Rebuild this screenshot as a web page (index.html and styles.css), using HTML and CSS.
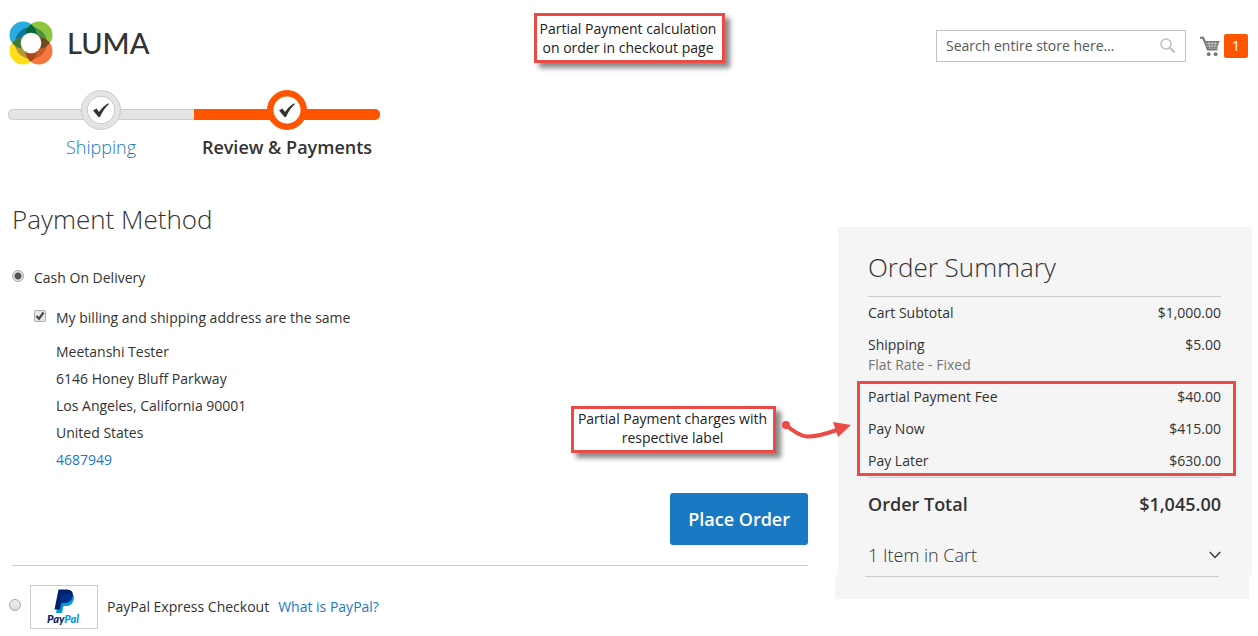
FILE: index.html
```html
<!DOCTYPE html>
<html lang="en">
<head>
<meta charset="utf-8">
<meta name="viewport" content="width=device-width, initial-scale=1">
<title>Checkout</title>
<link rel="stylesheet" href="styles.css">
</head>
<body>
<div class="page">
  <header class="header">
    <a class="logo" href="#">
      <svg class="logo-mark" viewBox="0 0 44 44" width="44" height="44" aria-hidden="true">
        <defs>
          <clipPath id="clip-blue"><circle cx="14" cy="14" r="13.5"/></clipPath>
          <clipPath id="clip-green"><circle cx="30" cy="14" r="13.5"/></clipPath>
          <clipPath id="clip-yellow"><circle cx="14" cy="30" r="13.5"/></clipPath>
          <clipPath id="clip-orange"><circle cx="30" cy="30" r="13.5"/></clipPath>
        </defs>
        <circle cx="14" cy="14" r="13.5" fill="#29abe2"/>
        <circle cx="30" cy="14" r="13.5" fill="#8cc63f"/>
        <circle cx="14" cy="30" r="13.5" fill="#ffde17"/>
        <circle cx="30" cy="30" r="13.5" fill="#f7783c"/>
        <g clip-path="url(#clip-blue)"><circle cx="22" cy="22" r="16" fill="#12759f"/></g>
        <g clip-path="url(#clip-green)"><circle cx="22" cy="22" r="16" fill="#4d9140"/></g>
        <g clip-path="url(#clip-yellow)"><circle cx="22" cy="22" r="16" fill="#b39a33"/></g>
        <g clip-path="url(#clip-orange)"><circle cx="22" cy="22" r="16" fill="#c45a2c"/></g>
        <g clip-path="url(#clip-blue)"><circle cx="30" cy="14" r="13.5" fill="#00693c"/><circle cx="14" cy="30" r="13.5" fill="#3f7a35"/></g>
        <g clip-path="url(#clip-orange)"><circle cx="30" cy="14" r="13.5" fill="#6b4a1f"/><circle cx="14" cy="30" r="13.5" fill="#a8481f"/></g>
        <circle cx="22" cy="22" r="10.300" fill="#fff"/>
      </svg>
      <span class="logo-text">LUMA</span>
    </a>
    <div class="tools">
      <form class="search" role="search">
        <input class="search-input" type="text" aria-label="Search" placeholder="Search entire store here...">
        <button class="search-button" type="button" aria-label="Search">
          <svg viewBox="0 0 16 16" width="16" height="16" aria-hidden="true"><circle cx="6" cy="6" r="5" fill="none" stroke="#c2c2c2" stroke-width="1.6"/><path d="M9.8 9.8 14.6 14.4" stroke="#c2c2c2" stroke-width="2.2"/></svg>
        </button>
      </form>
      <a class="cart" href="#" aria-label="Cart, 1 item">
        <svg viewBox="0 0 20 21" width="20" height="21" aria-hidden="true">
          <path d="M0 1.8h3.2l4.6 11.7h9.7" fill="none" stroke="#757575" stroke-width="2"/>
          <path d="M4 5h15.6l-2.4 7.5H7z" fill="#757575"/>
          <path d="M5.5 7.3h13M6.3 10h11.8M8.8 5.8l1 6M12 5.8v6M15.5 5.8l-.8 6" stroke="#fff" stroke-width=".5"/>
          <circle cx="8.7" cy="18.2" r="1.9" fill="#757575"/><circle cx="15.6" cy="18.2" r="1.9" fill="#757575"/>
        </svg>
        <span class="cart-count">1</span>
      </a>
    </div>
  </header>

  <ol class="progress">
    <li class="step">
      <span class="step-marker"><svg viewBox="0 0 18 16" width="18" height="16" aria-hidden="true"><path d="M1 8.5 4.5 6.5 7 10Q11 4 16.5 1.2L17 2Q11.5 7 8 15H6.5Z" fill="#333"/></svg></span>
      <a class="step-label" href="#">Shipping</a>
    </li>
    <li class="step step-active">
      <span class="step-marker"><svg viewBox="0 0 18 16" width="18" height="16" aria-hidden="true"><path d="M1 8.5 4.5 6.5 7 10Q11 4 16.5 1.2L17 2Q11.5 7 8 15H6.5Z" fill="#333"/></svg></span>
      <span class="step-label">Review &amp; Payments</span>
    </li>
  </ol>

  <div class="columns">
    <main class="payment">
      <h1 class="title">Payment Method</h1>
      <div class="choice">
        <input class="radio" type="radio" name="method" id="cod" checked>
        <label for="cod">Cash On Delivery</label>
      </div>
      <div class="billing">
        <div class="choice">
          <input class="checkbox" type="checkbox" id="same" checked>
          <label for="same">My billing and shipping address are the same</label>
        </div>
        <address class="address">
          Meetanshi Tester<br>
          6146 Honey Bluff Parkway<br>
          Los Angeles, California 90001<br>
          United States<br>
          <a href="#">4687949</a>
        </address>
      </div>
      <div class="actions"><button class="place-order" type="button">Place Order</button></div>
      <div class="paypal">
        <input class="radio" type="radio" name="method" id="paypal">
        <label class="paypal-label" for="paypal">
          <span class="paypal-logo">
            <svg viewBox="0 0 66 42" width="66" height="42" role="img" aria-label="PayPal">
              <path d="M29 7h11Q44 9 42.5 14 41 20 35 20h-2.5L31 27h-6Z" fill="#009cde"/>
              <path d="M27.5 3.5h9Q43 4 41.5 10.5 40 17 33.5 17H30.5L29 23.5h-5.5Z" fill="#012169"/>
              <path d="M30 8h8Q41.8 8 41.5 10.5 40 17 33.5 17h-5Z" fill="#002f86"/>
              <text class="paypal-word" x="32" y="37" text-anchor="middle"><tspan fill="#012169">Pay</tspan><tspan fill="#009cde">Pal</tspan></text>
            </svg>
          </span>
          PayPal Express Checkout
        </label>
        <a class="paypal-help" href="#">What is PayPal?</a>
      </div>
    </main>

    <aside class="sidebar">
      <div class="summary">
        <h2 class="title">Order Summary</h2>
        <table class="totals">
          <tbody>
            <tr><th scope="row">Cart Subtotal</th><td>$1,000.00</td></tr>
            <tr><th scope="row">Shipping<span class="method">Flat Rate - Fixed</span></th><td>$5.00</td></tr>
          </tbody>
          <tbody>
            <tr><th scope="row">Partial Payment Fee</th><td>$40.00</td></tr>
            <tr><th scope="row">Pay Now</th><td>$415.00</td></tr>
            <tr><th scope="row">Pay Later</th><td>$630.00</td></tr>
          </tbody>
          <tfoot>
            <tr><th scope="row">Order Total</th><td>$1,045.00</td></tr>
          </tfoot>
        </table>
        <button class="items" type="button" aria-expanded="false">
          <span>1 Item in Cart</span>
          <svg viewBox="0 0 12 8" width="12" height="8" aria-hidden="true"><path d="M.8 1 6 6.5 11.2 1" fill="none" stroke="#333" stroke-width="1.3"/></svg>
        </button>
      </div>
      <div class="summary-end"></div>
      <div class="highlight"></div>
      <div class="note-charges">
        <p class="note">Partial Payment charges with respective label</p>
        <svg class="arrow" viewBox="0 0 72 26" width="72" height="26" aria-hidden="true">
          <circle cx="6" cy="8" r="4" fill="#eb4b46"/>
          <path d="M6 8C22 22 28 23 57 13" fill="none" stroke="#eb4b46" stroke-width="4"/>
          <path d="M53 5 71 8 58 20Z" fill="#eb4b46"/>
        </svg>
      </div>
    </aside>
  </div>
  <p class="note note-top">Partial Payment calculation on order in checkout page</p>
</div>
</body>
</html>
```
FILE: styles.css
```css
* {
  box-sizing: border-box;
}

body {
  margin: 0;
  background: #fff;
  color: #333;
  font: 14px/20px "Open Sans", sans-serif;
}

a {
  color: #1979c3;
  text-decoration: none;
}

button,
input {
  font: inherit;
  color: inherit;
}

.page {
  position: relative;
}

.header {
  display: flex;
  justify-content: space-between;
  align-items: center;
  padding: 21px 10px 25px 9px;
}

.logo {
  display: flex;
  align-items: center;
  gap: 14px;
}

.logo-text {
  color: #333;
  font: 500 29px/44px Lato, sans-serif;
}

.tools {
  display: flex;
  align-items: center;
  gap: 14px;
  padding-top: 6px;
}

.search {
  display: flex;
  width: 250px;
  height: 32px;
  border: 1px solid #c2c2c2;
}

.search-input {
  flex: 1;
  min-width: 0;
  padding: 0 0 0 9px;
  border: 0;
  background: none;
}

.search-input::placeholder {
  color: #575757;
  opacity: 1;
}

.search-button {
  display: flex;
  align-items: center;
  padding: 0 9px;
  border: 0;
  background: none;
}

.cart {
  display: flex;
  align-items: center;
  gap: 4px;
}

.cart-count {
  width: 24px;
  border-radius: 2px;
  background: #ff5501;
  color: #fff;
  line-height: 24px;
  text-align: center;
}

.progress {
  display: flex;
  width: 372px;
  margin: 0 0 0 8px;
  padding: 0;
  list-style: none;
}

.step {
  position: relative;
  display: flex;
  flex: 1;
  flex-direction: column;
  align-items: center;
  gap: 4px;
  font-size: 18px;
  line-height: 26px;
  white-space: nowrap;
}

.step::before {
  position: absolute;
  top: 19px;
  right: 0;
  left: 0;
  height: 9px;
  border: 1px solid #ccc;
  border-right: 0;
  border-radius: 5px 0 0 5px;
  background: #e4e4e4;
  content: "";
}

.step-active::before {
  border-color: #ff5501;
  border-radius: 0 5px 5px 0;
  background: #ff5501;
}

.step-marker {
  position: relative;
  display: flex;
  align-items: center;
  justify-content: center;
  width: 40px;
  height: 40px;
  border: 1px solid #ccc;
  border-radius: 50%;
  background: radial-gradient(circle, #fff 13px, #ccc 13px, #ccc 14px, #e4e4e4 14px);
}

.step-active .step-marker {
  border-color: #ff5501;
  background: radial-gradient(circle, #fff 13px, #ff5501 14px);
}

.step-label {
  font-weight: 300;
}

.step-active .step-label {
  font-weight: 600;
}

.columns {
  display: grid;
  grid-template-columns: minmax(0, 1fr) 414px;
  gap: 30px;
  align-items: start;
  padding: 41px 6px 7px 12px;
}

.title {
  margin: 0;
  font-size: 26px;
  font-weight: 300;
  line-height: 36px;
}

.choice {
  display: flex;
  align-items: center;
  gap: 10px;
}

.payment > .choice {
  margin-top: 31px;
}

.radio,
.checkbox {
  flex: none;
  width: 12px;
  height: 12px;
  margin: 0 0 4px;
  appearance: none;
  border: 1px solid #a8a8a8;
  background: linear-gradient(#eee, #dcdcdc);
}

.radio {
  border-radius: 50%;
}

.radio:checked {
  background: radial-gradient(circle, #555 3px, #e8e8e8 4px);
}

.checkbox {
  border-radius: 2px;
}

.checkbox:checked {
  background: url("data:image/svg+xml,%3Csvg xmlns='http://www.w3.org/2000/svg' viewBox='0 0 10 10'%3E%3Cpath d='M1.5 5 4 7.8 8.5 1.5' fill='none' stroke='%23444' stroke-width='2.2'/%3E%3C/svg%3E") center / 10px no-repeat #e8e8e8;
}

.billing {
  padding: 20px 0 0 22px;
}

.address {
  padding: 10px 0 0 22px;
  font-style: normal;
  line-height: 27px;
}

.actions {
  display: flex;
  justify-content: flex-end;
  padding: 20px 0;
  border-bottom: 1px solid #ccc;
}

.place-order {
  padding: 13px 18px;
  border: 0;
  border-radius: 3px;
  background: #1979c3;
  color: #fff;
  font-size: 18px;
  font-weight: 600;
  line-height: 26px;
}

.paypal {
  display: flex;
  align-items: center;
  gap: 9px;
  margin: 19px 0 0 -3px;
}

.paypal-label {
  display: flex;
  align-items: center;
  gap: 9px;
}

.paypal-logo {
  display: flex;
  border: 1px solid #ccc;
}

.paypal-word {
  font: italic 900 11px Lato, sans-serif;
}

.sidebar {
  position: relative;
  margin-top: 26px;
}

.summary {
  padding: 22px 31px 0 30px;
  background: #f5f5f5;
}

.totals {
  width: 100%;
  margin-top: 11px;
  border-collapse: collapse;
  border-top: 1px solid #ccc;
}

.totals th,
.totals td {
  padding: 6px 0;
  font-weight: 400;
  text-align: left;
  vertical-align: top;
}

.totals td {
  text-align: right;
}

.totals .method {
  display: block;
  color: #757575;
}

.totals tfoot {
  border-top: 1px solid #ccc;
}

.totals tfoot th,
.totals tfoot td {
  padding: 13px 0 15px;
  font-size: 18px;
  font-weight: 600;
  line-height: 26px;
}

.items {
  display: flex;
  justify-content: space-between;
  align-items: center;
  width: 100%;
  padding: 11px 0 8px;
  border: 0;
  background: none;
  font-size: 18px;
  font-weight: 300;
  line-height: 24px;
}

.summary-end {
  height: 24px;
  margin: 0 3px 0 -3px;
  background: linear-gradient(#ccc, #ccc) 30px 1px / 354px 1px no-repeat #f5f5f5;
}

.highlight {
  position: absolute;
  top: 154px;
  right: 16px;
  left: 19px;
  height: 95px;
  border: 3px solid #eb4b46;
}

.note {
  width: 205px;
  margin: 0;
  padding: 0 2px 3px 0;
  border: 3px solid #eb4b46;
  background: #fff;
  box-shadow: 5px 5px 5px #888;
  color: #222;
  font: 14px/19px "Open Sans", sans-serif;
  text-align: center;
}

.note-charges {
  position: absolute;
  top: 179px;
  right: 400px;
  display: flex;
  align-items: center;
  gap: 4px;
}

.note-top {
  position: absolute;
  top: 13px;
  left: 50%;
  width: 191px;
  margin-left: -95px;
  padding: 3px 3px 3px 0;
}
```
